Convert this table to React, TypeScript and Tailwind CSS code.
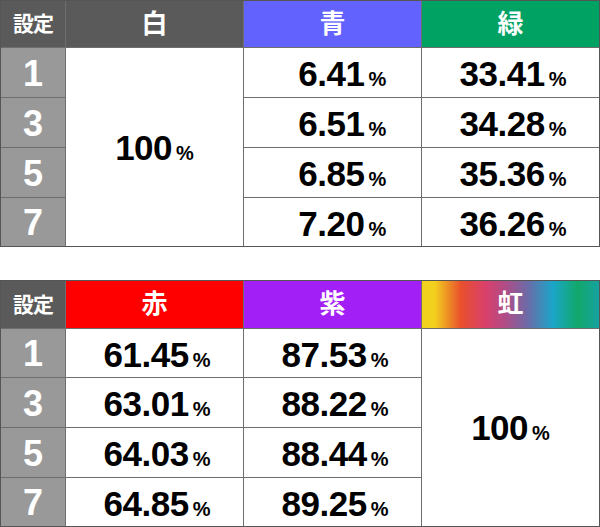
import React from 'react';

const font = { fontFamily: '"Liberation Sans", "Noto Sans CJK JP", Arial, sans-serif' };

type Head = { label: string; className: string };

const settings = ['1', '3', '5', '7'];

// short values keep the width of a five-character value
const Pct: React.FC<{ value: string; pad?: boolean }> = ({ value, pad }) => (
  <span className="flex items-baseline justify-center text-black">
    {pad && <span className="invisible text-[35px] font-bold leading-none">0</span>}
    <span className="text-[35px] font-bold leading-none tracking-[-0.5px]">{value}</span>
    <span className="ml-[4px] text-[20px] font-bold leading-none">%</span>
  </span>
);

const HeadCell: React.FC<Head> = ({ label, className }) => (
  <div className={`flex items-center justify-center text-[26px] font-bold text-white ${className}`}>
    {label}
  </div>
);

const SettingHead = () => (
  <div className="flex items-center justify-center bg-[#5a5a5a] text-[21px] font-bold text-white tracking-[-1px]">
    設定
  </div>
);

const SettingCell: React.FC<{ n: string }> = ({ n }) => (
  <div className="flex items-center justify-center bg-[#999999] pt-[2px] text-[36px] font-bold leading-none text-white">
    {n}
  </div>
);

const Full = () => (
  <div className="row-span-4 flex items-center justify-center bg-white">
    <Pct value="100" />
  </div>
);

const Cell: React.FC<{ value: string }> = ({ value }) => (
  <div className={`flex items-center justify-center bg-white pt-[2px] ${value.length < 5 ? '' : 'pl-[5px]'}`}>
    <Pct value={value} pad={value.length < 5} />
  </div>
);

export default function App() {
  const blue = ['6.41', '6.51', '6.85', '7.20'];
  const green = ['33.41', '34.28', '35.36', '36.26'];
  const red = ['61.45', '63.01', '64.03', '64.85'];
  const purple = ['87.53', '88.22', '88.44', '89.25'];

  return (
    <div className="w-[600px] h-[527px] bg-white" style={font}>
      {/* 白 / 青 / 緑 */}
      <div className="grid grid-cols-[64px_177px_177px_177px] grid-rows-[46px_49px_49px_49px_48px] gap-px bg-[#6e6e6e] border border-[#555]">
        <SettingHead />
        <HeadCell label="白" className="bg-[#5a5a5a]" />
        <HeadCell label="青" className="bg-[#6262ff]" />
        <HeadCell label="緑" className="bg-[#00a264]" />
        {settings.map((s, i) => (
          <React.Fragment key={s}>
            <SettingCell n={s} />
            {i === 0 && <Full />}
            <Cell value={blue[i]} />
            <Cell value={green[i]} />
          </React.Fragment>
        ))}
      </div>

      {/* 赤 / 紫 / 虹 */}
      <div className="mt-[33px] grid grid-cols-[64px_177px_177px_177px] grid-rows-[47px_48px_49px_49px_48px] gap-px bg-[#6e6e6e] border border-[#555]">
        <SettingHead />
        <HeadCell label="赤" className="bg-[#ff0000]" />
        <HeadCell label="紫" className="bg-[#a21ff6]" />
        <HeadCell
          label="虹"
          className="bg-[linear-gradient(to_right,#f2d11e_0%,#f2d11e_7%,#e9502c_22%,#d8406c_36%,#b04c86_47%,#6a6ca8_60%,#1aa6c8_74%,#12a86a_88%,#16a2a0_100%)]"
        />
        {settings.map((s, i) => (
          <React.Fragment key={s}>
            <SettingCell n={s} />
            <Cell value={red[i]} />
            <Cell value={purple[i]} />
            {i === 0 && <Full />}
          </React.Fragment>
        ))}
      </div>
    </div>
  );
}
